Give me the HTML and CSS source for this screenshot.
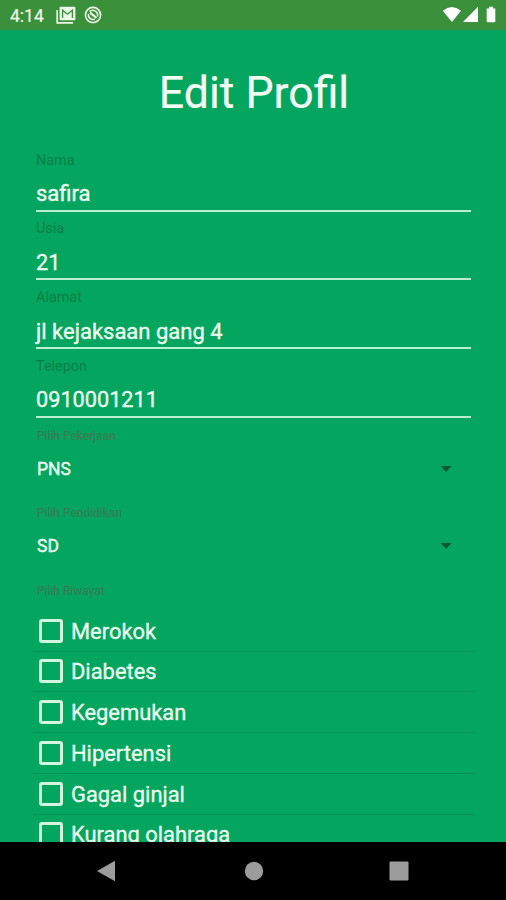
FILE: index.html
```html
<!DOCTYPE html>
<html lang="id">
<head>
<meta charset="utf-8">
<title>Edit Profil</title>
<link rel="stylesheet" href="styles.css">
</head>
<body>
<div class="screen">
  <header class="status">
    <span class="clock">4:14</span>
    <svg class="mail" width="20" height="18" viewBox="0 0 20 18"><path d="M1.2 4v12.8H17" fill="none" stroke="#eef8e8" stroke-width="1.7"/><rect x="3.6" y="0.8" width="15.8" height="13.4" rx="1" fill="#eef8e8"/><path d="M6.6 12V4.2l4.9 4 4.9-4V12" fill="none" stroke="#3a903b" stroke-width="1.3"/></svg>
    <svg class="sync" width="18" height="18" viewBox="0 0 18 18" fill="none" stroke="#eef8e8"><circle cx="9" cy="9" r="7.6" stroke-width="1.6"/><path d="M5.6 5.6a4.8 4.8 0 0 1 7.8 5M4.4 7.8a4.8 4.8 0 0 0 6.4 5.4" stroke-width="1.6"/><path d="M6 6.6l6.4 5.2" stroke-width="2.2"/></svg>
    <svg class="signals" width="58" height="18" viewBox="0 0 58 18" fill="#fff"><path d="M0.8 4.8Q9.8-2.6 19 4.8L9.9 16z"/><path d="M36 .7V16H21z"/><path d="M44.7 2.5h2.4V.8h4v1.7h2.2v12.7q0 1-1 1h-6.6q-1 0-1-1z"/></svg>
  </header>
  <main class="page">
    <h1 class="title">Edit Profil</h1>
    <form class="form">
      <label class="field"><span class="hint">Nama</span><span class="value">safira</span></label>
      <label class="field"><span class="hint">Usia</span><span class="value number">21</span></label>
      <label class="field"><span class="hint">Alamat</span><span class="value">jl kejaksaan gang 4</span></label>
      <label class="field"><span class="hint">Telepon</span><span class="value number">0910001211</span></label>
      <div class="picker"><span class="caption">Pilih Pekerjaan</span><div class="choice"><span>PNS</span><svg width="12" height="7" viewBox="0 0 12 7"><path d="M.5 0h11L6 6z" fill="#045a2c"/></svg></div></div>
      <div class="picker"><span class="caption">Pilih Pendidikan</span><div class="choice"><span>SD</span><svg width="12" height="7" viewBox="0 0 12 7"><path d="M.5 0h11L6 6z" fill="#045a2c"/></svg></div></div>
      <span class="caption">Pilih Riwayat</span>
      <ul class="history">
        <li><i class="box"></i>Merokok</li>
        <li><i class="box"></i>Diabetes</li>
        <li><i class="box"></i>Kegemukan</li>
        <li><i class="box"></i>Hipertensi</li>
        <li><i class="box"></i>Gagal ginjal</li>
        <li><i class="box"></i>Kurang olahraga</li>
      </ul>
    </form>
  </main>
  <nav class="nav">
    <svg width="18" height="22" viewBox="0 0 18 22"><path d="M18 .8v20.4L0 11z"/></svg>
    <svg class="home" width="20" height="20" viewBox="0 0 20 20"><circle cx="10" cy="10" r="9.2"/></svg>
    <svg width="20" height="20" viewBox="0 0 20 20"><rect x=".5" y=".5" width="19" height="19" rx="1"/></svg>
  </nav>
</div>
</body>
</html>
```
FILE: styles.css
```css
* { box-sizing: border-box; }
body { margin: 0; background: #000; }
.screen {
  width: 506px;
  height: 900px;
  display: flex;
  flex-direction: column;
  overflow: hidden;
  font-family: Roboto, "Liberation Sans", sans-serif;
  background: #04a55f;
}
.status {
  flex: none;
  height: 30px;
  padding: 0 6px 0 10px;
  display: flex;
  align-items: center;
  background: #3a903b;
  color: #eef8e8;
}
.clock {
  width: 47px;
  font-size: 17.5px;
  line-height: 20px;
  padding-top: 1px;
  -webkit-text-stroke: .2px #eef8e8;
}
.mail { margin-left: -1px; }
.sync { margin-left: 8px; }
.signals { margin-left: auto; }
.page { flex: 1; min-height: 0; overflow: hidden; }
.title {
  margin: 35px 0 0;
  height: 56px;
  padding-left: 2px;
  line-height: 56px;
  font-size: 44.6px;
  font-weight: 400;
  text-align: center;
  color: #f4fff4;
  -webkit-text-stroke: .2px #f4fff4;
}
.form { padding: 28px 31px 0 33px; }
.field {
  display: flex;
  flex-direction: column;
  height: 68.8px;
  padding: 2.6px 4px 0 3px;
}
.hint { font-size: 14.4px; line-height: 18px; color: #087f45; }
.value {
  height: 42px;
  padding-top: 11.4px;
  border-bottom: 2px solid #b9efcd;
  font-size: 22px;
  line-height: 26px;
  color: #edfff0;
  -webkit-text-stroke: .35px #edfff0;
}
.number { font-size: 21.7px; }
.caption {
  display: block;
  height: 14px;
  padding-left: 4px;
  font-size: 12px;
  line-height: 14px;
  color: #3b7a52;
}
.picker { height: 77.3px; }
.field + .picker { margin-top: 5px; }
.choice {
  margin-top: 14px;
  height: 24px;
  padding: 0 23px 0 4px;
  display: flex;
  align-items: center;
  justify-content: space-between;
  font-size: 17.5px;
  line-height: 24px;
  color: #edfff0;
  -webkit-text-stroke: .4px #edfff0;
}
.history { margin: 13px 0 0; padding: 0; list-style: none; }
.history li {
  height: 40.75px;
  padding: 2px 0 0 6px;
  display: flex;
  align-items: center;
  border-bottom: 1px solid #049351;
  font-size: 21.9px;
  line-height: 26px;
  color: #edfff0;
  -webkit-text-stroke: .3px #edfff0;
}
.box {
  flex: none;
  width: 24px;
  height: 24px;
  margin: -2px 8px 0 0;
  border: 3px solid #d2f7de;
  border-radius: 3px;
}
.nav {
  flex: none;
  height: 58px;
  padding: 0 97px;
  display: flex;
  align-items: center;
  justify-content: space-between;
  background: #000;
  fill: #9c9c9c;
}
.home { margin-left: 3px; }
```
